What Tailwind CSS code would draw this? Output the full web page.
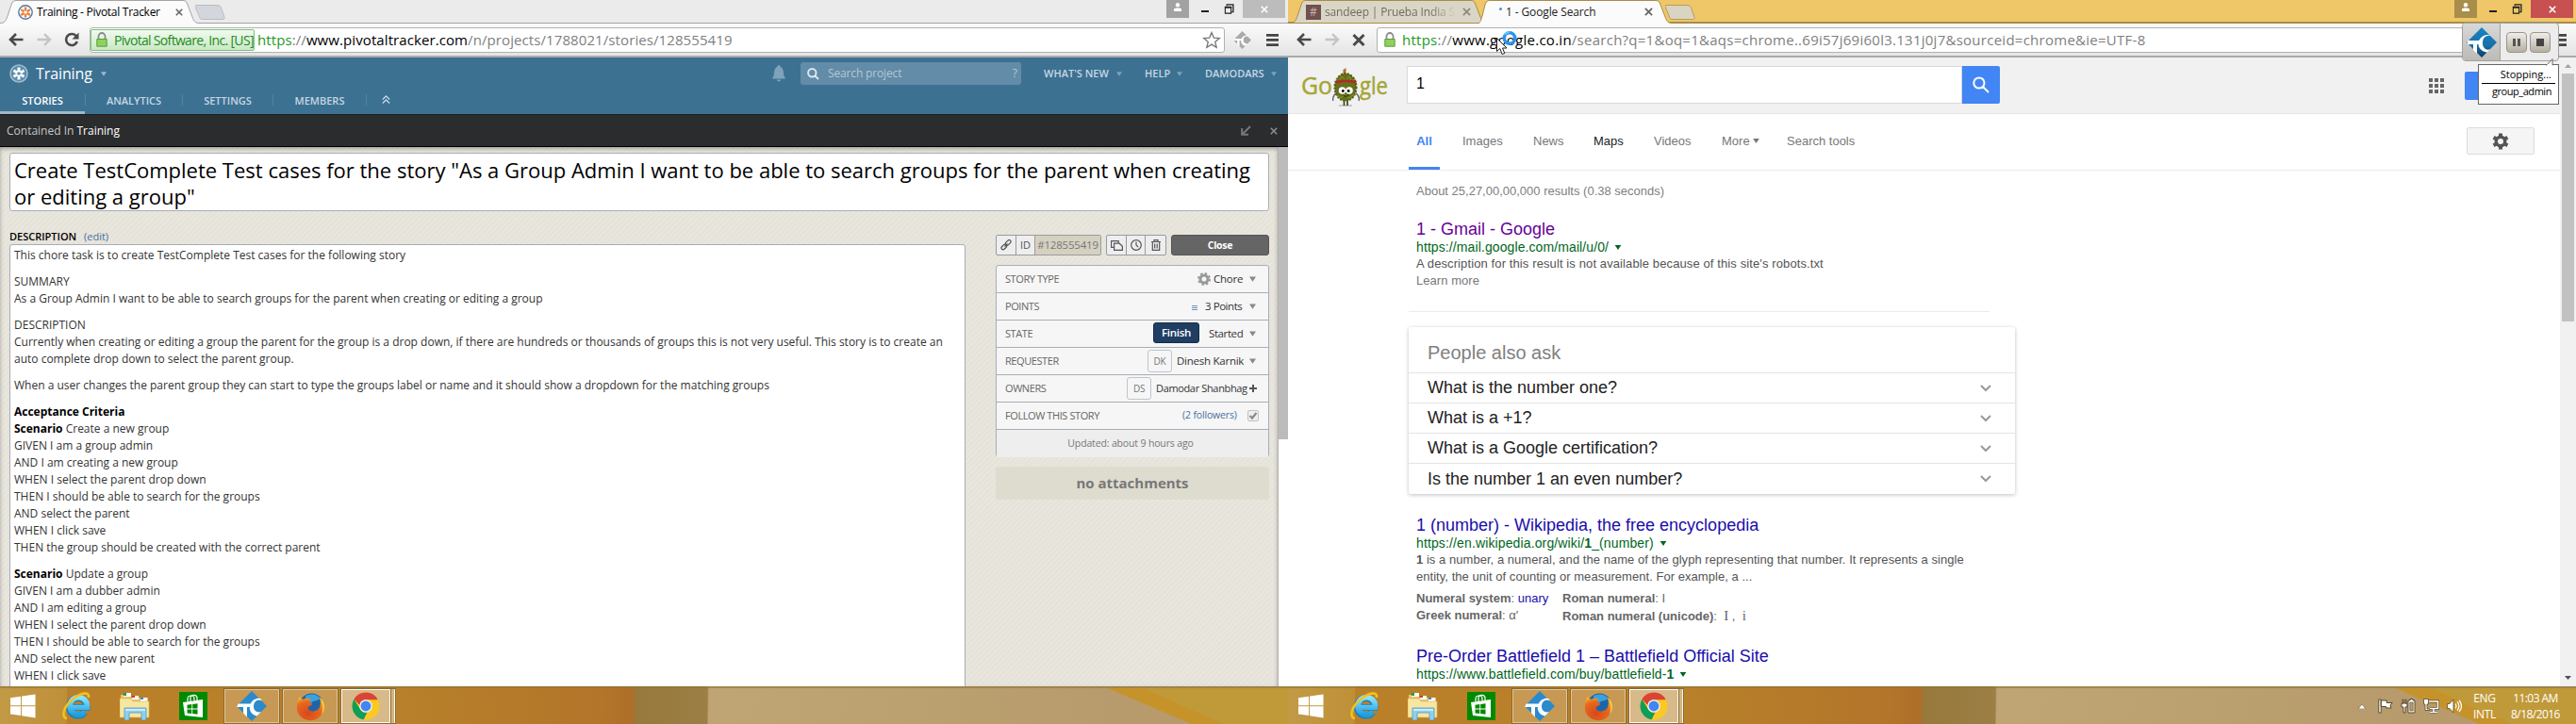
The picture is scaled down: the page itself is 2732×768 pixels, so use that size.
<!DOCTYPE html>
<html lang="en">
<head>
<meta charset="utf-8">
<title>Desktop</title>
<script src="https://cdn.jsdelivr.net/npm/@tailwindcss/browser@4"></script>
</head>
<body class="w-[2732px] h-[768px] overflow-hidden bg-white font-['Open_Sans',sans-serif] text-[12px] whitespace-nowrap">
<svg width="0" height="0" class="absolute">
  <defs>
    <linearGradient id="ieg" x1="0" y1="0" x2="0" y2="1"><stop offset="0" stop-color="#8fe3fb"/><stop offset="1" stop-color="#1f9ddf"/></linearGradient>
    <linearGradient id="tcg" x1="0" y1="0" x2="0" y2="1"><stop offset="0" stop-color="#1b84c4"/><stop offset=".6" stop-color="#1670ab"/><stop offset="1" stop-color="#0a3a60"/></linearGradient>
    <radialGradient id="ffg" cx=".4" cy=".7" r=".7"><stop offset="0" stop-color="#d9481b"/><stop offset=".7" stop-color="#e66a1c"/><stop offset="1" stop-color="#f8b32c"/></radialGradient>
  </defs>
  <symbol id="win" viewBox="0 0 28 26"><path fill="#fff" d="M0 4 11.5 2.3v10H0zM12.5 2.1 27.5 0v12.3h-15zM0 13.3h11.5v10L0 21.7zM12.5 13.3h15V26l-15-2.4z"/></symbol>
  <symbol id="ie" viewBox="0 0 32 32"><path fill="none" stroke="#1681bb" stroke-width="7.2" d="M7.500 17.500H27A9.300 9.300 0 1 0 25 22.500"/><path fill="none" stroke="url(#ieg)" stroke-width="5.6" d="M7.500 17.500H27.500A9.300 9.300 0 1 0 25 22.500"/><path fill="none" stroke="#f4c01e" stroke-width="2.600" d="M6 29C-1 28 3 15 13 8 21 2 30 0 29 7"/></symbol>
  <symbol id="folder" viewBox="0 0 32 30"><path fill="#e7c46c" d="M1 3h9l2 3h18v20H1z"/><path fill="#fff" d="M4 1h8v4H4zM13 4h7v4h-7zM22 6h7v4h-7z"/><path fill="#1aa04b" d="M4 1h3v3H4z"/><path fill="#d33" d="M13 4h3v2h-3z"/><path fill="#2a8fd0" d="M22 6h3v2h-3z"/><path fill="#f7e6a0" stroke="#d9b75f" stroke-width=".6" d="M0 7h12l2 3h17v17H0z"/><path fill="#8fd0ee" stroke="#4b9dc9" stroke-width=".8" d="M5 17h23v13h-5v-8H10v8H5z"/><path fill="#c9ecfa" d="M6 18h21v2H6z"/></symbol>
  <symbol id="store" viewBox="0 0 30 30"><path fill="#008a00" d="M0 0h30v30H0z"/><path fill="none" stroke="#fff" stroke-width="1.2" d="M9 10V7c0-4 7-4 7 0v2M12 10V6c0-4 7-3 7 0v3"/><path fill="#fff" d="M4 11l21-3v19L6 25z"/><path fill="#008a00" d="M8.500 13.700l4.800-.600v4.500H8.500zM14.200 13l5.300-.8v5.400h-5.300zM8.500 18.500h4.800V23l-4.800-.6zM14.200 18.500h5.300v5.300l-5.300-.7z"/></symbol>
  <symbol id="tc" viewBox="0 0 32 32"><path d="M16 0 32 16 16 32 0 16z"/><path fill="#fff" d="M1.500 13.500h13v3.500H11v10.500l-4-4V17H0zM27 10c-6-2-9 2-9 6.500s4 7 8 5.500l-4.500 4.500c-7-1-9-8-7-12.500 2-5 7-7 10.500-6z"/></symbol>
  <symbol id="tcw" viewBox="0 0 32 32"><path fill="url(#tcg)" d="M16 0 32 16 16 32 0 16z"/><path fill="#fff" d="M1 14h13v4h-3v10l-4-4v-6H1zM26 9c-7-1-9 3-9 8s4 8 8 6l-3 3.500c-8-1-11-7-9-12 2-5 8-8 13-5.500z"/></symbol>
  <symbol id="ff" viewBox="0 0 32 32"><circle cx="17" cy="15" r="13.500" fill="#1f64a8"/><path fill="#3ba3dc" d="M10 5c5-4 13-3 16 2-3 4-8 2-9 5-3 0-6-2-7-7z"/><path fill="url(#ffg)" d="M4 5c1 2 2 3 4 3 4-2 6-1 8 0-2 2-1 4 2 5-1 3-5 2-5 5 1 4 7 4 11 1 4-4 3-10 1-14 6 5 7 12 4 18-3 6-9 9-15 8C5 30 0 23 1 15c0-3 1-7 3-10z"/><path fill="#fbd64a" d="M27 6c5 6 5 13 1 19 2-7 2-12-1-19z"/></symbol>
  <symbol id="chrome" viewBox="0 0 32 32"><circle cx="16" cy="16" r="15.500" fill="#fbc923"/><path fill="#da4437" d="M2.600 8.200A15.500 15.500 0 0 1 29.700 8.800H16a7.200 7.200 0 0 0-7 6z"/><path fill="#0f9d58" d="M2.600 8.200 9.800 19.600a7.200 7.200 0 0 0 7.700 3.400L13.600 31.300A15.500 15.500 0 0 1 2.600 8.200z"/><circle cx="16" cy="16" r="7.200" fill="#f3f3f3"/><circle cx="16" cy="16" r="5.800" fill="#4285f4"/></symbol>
  <symbol id="back" viewBox="0 0 16 14"><path fill="none" stroke="currentColor" stroke-width="2.600" d="M15.500 7H2.500M8 1 2 7l6 6"/></symbol>
  <symbol id="fwd" viewBox="0 0 16 14"><path fill="none" stroke="currentColor" stroke-width="2.400" d="M.5 7h13M8 1l6 6-6 6"/></symbol>
  <symbol id="lock" viewBox="0 0 12 16"><path fill="none" stroke="#8b8b8b" stroke-width="1.800" d="M2.500 8V4.500a3.500 3.500 0 0 1 7 0V8"/><path fill="#8fd15c" stroke="#5c9e3c" stroke-width="1" d="M.8 7.500h10.400v7.700H.8z"/></symbol>
  <symbol id="person" viewBox="0 0 10 10"><circle cx="5" cy="2.300" r="2.200" fill="#fff"/><path fill="#fff" d="M1 9V6.500C1 5 9 5 9 6.500V9z"/></symbol>
  <symbol id="restore" viewBox="0 0 11 12"><path fill="none" stroke="#222" stroke-width="1.400" d="M3 2.500V1h7.300v8.500H8.500"/><path fill="none" stroke="#222" stroke-width="1.200" d="M1 4h6.800v7H1z"/><path fill="#222" d="M.5 3h8v2h-8z"/></symbol>
  <symbol id="x" viewBox="0 0 10 10"><path fill="none" stroke="currentColor" stroke-width="2" d="M1 1l8 8M9 1l-8 8"/></symbol>
  <symbol id="tri" viewBox="0 0 8 6"><path fill="currentColor" d="M0 0h8L4 6z"/></symbol>
  <symbol id="menu" viewBox="0 0 13 13"><path fill="#444" d="M0 0h13v2.700H0zM0 5.100h13v2.700H0zM0 10.200h13v2.700H0z"/></symbol>
  <symbol id="chev" viewBox="0 0 12 8"><path fill="none" stroke="#999" stroke-width="2" d="M1 1l5 5 5-5"/></symbol>
</svg>

<main class="flex h-[728px]">
<!-- Left monitor: Pivotal Tracker -->
<section class="w-[1366px] h-[728px] flex flex-col shrink-0 overflow-hidden">
  <div class="relative h-[25px] bg-[#ebebeb] border-b border-[#a3a3a3] flex shrink-0">
    <div class="relative w-[207px] h-[25px] flex items-center pl-[19px]">
      <svg class="absolute left-0 top-0" width="212" height="25"><path d="M-1 24.500C6 24.500 6 22 8 17L12 5c1-3 2-4.500 5-4.500h177c3 0 4 1.500 5 4.500l5 13c2 5 3 6.500 8 6.500v1H0z" fill="#fbfbfb" stroke="#a3a3a3"/></svg>
      <svg class="relative" width="16" height="16" viewBox="0 0 16 16"><circle cx="8" cy="8" r="7.200" fill="#fff" stroke="#4c7ba8" stroke-width="1.400"/><g stroke="#ee7f3c" stroke-width="2.400"><path d="M8 2.500v4M8 9.500v4M3.200 5.200l3.400 2M9.500 8.900l3.400 2M3.200 10.900l3.400-2M9.500 7.200l3.400-2"/></g></svg>
      <span class="relative ml-[4px] w-[132px] tracking-[-0.28px]">Training - Pivotal Tracker</span>
      <svg class="relative ml-[15px] text-[#666]" width="8" height="8"><use href="#x"/></svg>
    </div>
    <svg width="32" height="25"><path d="M1 5.500h22c3 0 4 1 5 4l3 9c.5 2-1 2-2 2H8c-3 0-3-1-4-4L0 7c0-1 0-1.500 1-1.500z" fill="#d3d7dd" stroke="#b8bcc2"/></svg>
    <div class="flex-1"></div>
    <div class="w-[24px] h-[19px] bg-[#a2a2a2] flex justify-center pt-[3px]"><svg width="10" height="10"><use href="#person"/></svg></div>
    <div class="w-[57px] h-[19px] flex pl-[13px] pt-[4px]"><i class="block w-[8px] h-[2px] bg-[#222] mt-[7px]"></i><svg class="ml-[16px]" width="11" height="11"><use href="#restore"/></svg></div>
    <div class="w-[45px] h-[19px] bg-[#bcbcbc] text-white flex justify-center items-center mr-[3px]"><svg width="8" height="8"><use href="#x"/></svg></div>
  </div>
  <div class="h-[36px] shrink-0 flex items-center bg-gradient-to-b from-[#fbfbfb] to-[#e4e4e4] border-b-2 border-[#aaa] pl-[9px] text-[#4a4a4a]">
    <svg width="16" height="14"><use href="#back"/></svg>
    <svg class="ml-[14px] text-[#c4c4c4]" width="16" height="14"><use href="#fwd"/></svg>
    <svg class="ml-[13px]" width="16" height="16" viewBox="0 0 16 16"><path fill="none" stroke="currentColor" stroke-width="2.600" d="M13 4.500A6 6 0 1 0 13.800 10"/><path fill="currentColor" d="M15.500.5v7h-7z"/></svg>
    <div class="ml-[11px] w-[1204px] h-[27px] bg-white border border-[#b1b1b1] rounded-[3px] flex items-center">
      <div class="w-[174px] h-[23px] bg-gradient-to-b from-[#f1faf0] to-[#c9e8c5] border border-[#7fc07f] rounded-[2px] flex items-center pl-[5px] text-[#238b1b] text-[14px]">
        <svg width="12" height="16"><use href="#lock"/></svg><span class="ml-[7px] tracking-[-0.68px]">Pivotal Software, Inc. [US]</span></div>
      <span class="ml-[3px] text-[15px] text-[#808080] tracking-[0.09px] w-[600px]"><span class="text-[#1d9a1d]">https</span>://<span class="text-black">www.pivotaltracker.com</span>/n/projects/1788021/stories/128555419</span>
      <div class="flex-1"></div>
      <svg class="mr-[3px]" width="20" height="19" viewBox="0 0 20 19"><path fill="#fff" stroke="#777" stroke-width="1.300" d="M10 1.500l2.300 5.600 6 .4-4.600 3.900 1.500 5.900L10 14.100l-5.200 3.200 1.500-5.900L1.700 7.500l6-.4z"/></svg>
    </div>
    <svg class="ml-[9px] fill-[#aaa]" width="19" height="19"><use href="#tc"/></svg>
    <svg class="ml-[16px]" width="13" height="13"><use href="#menu"/></svg>
  </div>
  <div class="h-[60px] shrink-0 bg-[#3d7192] flex flex-col text-[#c5d7e2]">
    <div class="h-[34px] flex items-center pl-[10px]">
      <svg width="20" height="20" viewBox="0 0 20 20"><circle cx="10" cy="10" r="9" fill="#5b8dac" stroke="#9dbccd" stroke-width="1.600"/><g stroke="#fff" stroke-width="3"><path d="M10 3.500v5M10 11.500v5M4.500 6.800l4 2.400M11.500 10.800l4 2.400M4.500 13.200l4-2.400M11.500 9.200l4-2.400"/></g></svg>
      <span class="ml-[8px] w-[61px] text-[16px] text-white tracking-[-0.1px]">Training</span>
      <svg class="ml-[8px] text-[#9bbace]" width="6" height="5"><use href="#tri"/></svg>
      <svg class="ml-[706px]" width="14" height="18" viewBox="0 0 14 18"><path fill="#7fa3bb" d="M7 0c1 0 1.500 1 1.500 1.800C12 3 12 8 12.300 11l1.700 3.500H0L1.700 11C2 8 2 3 5.500 1.800 5.500 1 6 0 7 0zM5 15.500h4c0 2.500-4 2.500-4 0z"/></svg>
      <div class="ml-[16px] w-[234px] h-[24px] rounded-[3px] bg-[#628ca8] flex items-center pl-[7px] pr-[4px] text-[#b3c9d7]">
        <svg width="13" height="13" viewBox="0 0 13 13"><path fill="none" stroke="#dce7ee" stroke-width="2" d="M8.400 8.400 12 12M9.500 5.200a4.200 4.200 0 1 1-8.400 0 4.200 4.200 0 0 1 8.400 0z"/></svg>
        <span class="ml-[9px] flex-1 tracking-[-0.15px]">Search project</span><span>?</span>
      </div>
      <span class="ml-[24px] w-[70px] font-semibold text-[11px]">WHAT'S NEW</span><svg class="ml-[7px] text-[#7da2b9]" width="6" height="5"><use href="#tri"/></svg>
      <span class="ml-[24px] w-[27px] font-semibold text-[11px]">HELP</span><svg class="ml-[7px] text-[#7da2b9]" width="6" height="5"><use href="#tri"/></svg>
      <span class="ml-[24px] w-[63px] font-semibold text-[11px]">DAMODARS</span><svg class="ml-[7px] text-[#7da2b9]" width="6" height="5"><use href="#tri"/></svg>
    </div>
    <div class="h-[26px] flex font-semibold text-[11px] leading-[23px] bg-no-repeat">
      <span class="w-[90px] text-center text-white border-b-3 border-[#a0b8c9] relative">STORIES</span>
      <i class="w-px h-[12px] mt-[5px] bg-[#5583a1]"></i>
      <span class="w-[102px] text-center">ANALYTICS</span>
      <i class="w-px h-[12px] mt-[5px] bg-[#5583a1]"></i>
      <span class="w-[95px] text-center">SETTINGS</span>
      <i class="w-px h-[12px] mt-[5px] bg-[#5583a1]"></i>
      <span class="w-[98px] text-center">MEMBERS</span>
      <i class="w-px h-[12px] mt-[5px] bg-[#5583a1]"></i>
      <svg class="ml-[16px] mt-[6px]" width="9" height="9" viewBox="0 0 9 9"><path fill="none" stroke="#c5d7e2" stroke-width="1.300" d="M.8 4.500l3.700-3.500 3.700 3.500M.8 8.500l3.700-3.500 3.700 3.500"/></svg>
    </div>
  </div>
  <div class="h-[35px] shrink-0 bg-[#2b2c2e] border-t border-t-[#1c1c1d] border-b border-b-black flex items-center pl-[7px] text-[#c8c8c8]">
    <span class="flex-1">Contained In <span class="text-white">Training</span></span>
    <svg class="mr-[20px]" width="11" height="11" viewBox="0 0 11 11"><path fill="none" stroke="#777" stroke-width="2" d="M10 1 2 9M1.200 3v6.800H8"/></svg>
    <svg class="mr-[11px] text-[#8c8c8c]" width="8" height="8"><use href="#x"/></svg>
  </div>
  <div class="flex-1 flex min-h-0">
    <div class="w-[1356px] pl-[10px] pt-[6px] bg-[repeating-linear-gradient(135deg,#e9e6de_0px,#e9e6de_2px,#e5e2d9_2px,#e5e2d9_4px)] shadow-[inset_0_2px_4px_rgba(0,0,0,0.3)] border-r border-[#b5b3ad] overflow-hidden">
      <div class="w-[1336px] h-[62px] bg-white border border-[#a9adb5] rounded-[3px] pl-[4px] pt-[3px] text-[22px] leading-[28px] text-black"><div>Create TestComplete Test cases for the story "As a Group Admin I want to be able to search groups for the parent when creating</div><div>or editing a group"</div></div>
      <div class="flex">
        <div class="w-[1014px] pt-[18px]">
          <div class="h-[17px] leading-[17px] text-[11px] flex"><b class="font-semibold text-black w-[79px]">DESCRIPTION</b><span class="text-[#4271a0]">(edit)</span></div>
          <div class="h-[480px] bg-white border border-[#a9adb5] rounded-[3px] pl-[4px] pt-[2px] leading-[18px] text-[#333] flex flex-col gap-[10px]">
            <div>This chore task is to create TestComplete Test cases for the following story</div>
            <div>SUMMARY<br>As a Group Admin I want to be able to search groups for the parent when creating or editing a group</div>
            <div>DESCRIPTION<br>Currently when creating or editing a group the parent for the group is a drop down, if there are hundreds or thousands of groups this is not very useful. This story is to create an<br>auto complete drop down to select the parent group.</div>
            <div>When a user changes the parent group they can start to type the groups label or name and it should show a dropdown for the matching groups</div>
            <div><b class="text-black">Acceptance Criteria</b><br><b class="text-black">Scenario</b> Create a new group<br>GIVEN I am a group admin<br>AND I am creating a new group<br>WHEN I select the parent drop down<br>THEN I should be able to search for the groups<br>AND select the parent<br>WHEN I click save<br>THEN the group should be created with the correct parent</div>
            <div><b class="text-black">Scenario</b> Update a group<br>GIVEN I am a dubber admin<br>AND I am editing a group<br>WHEN I select the parent drop down<br>THEN I should be able to search for the groups<br>AND select the new parent<br>WHEN I click save</div>
          </div>
        </div>
        <div class="ml-[32px] mt-[25px] w-[290px]">
          <div class="flex h-[22px] text-[#555]">
            <div class="flex w-[112px] border border-[#999ba0] rounded-[2px] bg-[#eee]">
              <div class="w-[20px] flex items-center justify-center"><svg width="12" height="12" viewBox="0 0 12 12"><g fill="none" stroke="#555" stroke-width="1.200"><rect x="5" y="1.600" width="6.500" height="3.600" rx="1.800" transform="rotate(-45 8.200 3.400)"/><rect x=".6" y="6.200" width="6.500" height="3.600" rx="1.800" transform="rotate(-45 3.800 8)"/><path d="M4.500 7.500l3-3"/></g></svg></div>
              <div class="w-[21px] border-x border-[#999ba0] text-[11px] leading-[20px] text-center">ID</div>
              <div class="flex-1 bg-[#d5d0c0] text-[11.500px] leading-[20px] text-center text-[#777] tracking-[-0.2px]">#128555419</div>
            </div>
            <div class="ml-[5px] flex w-[64px] border border-[#999ba0] rounded-[2px] bg-[#eee]">
              <div class="w-[20px] flex items-center justify-center"><svg width="13" height="11" viewBox="0 0 13 11"><path fill="#eee" stroke="#555" stroke-width="1.200" d="M3 7.400H.6V.6h7.600V3M3.600 3.200h5.600l3.200 3v4.200H3.600z"/></svg></div>
              <div class="w-[21px] border-x border-[#999ba0] flex items-center justify-center"><svg width="12" height="12" viewBox="0 0 12 12"><path fill="none" stroke="#555" stroke-width="1.200" d="M11.300 6A5.300 5.300 0 1 1 .7 6a5.300 5.300 0 0 1 10.600 0zM6 2.500V6l2.200 2.200"/></svg></div>
              <div class="flex-1 flex items-center justify-center"><svg width="10" height="12" viewBox="0 0 10 12"><path fill="none" stroke="#555" stroke-width="1.200" d="M0 2.500h10M3 2.500V.7h4v1.800M1.300 2.500v8.800h7.400V2.500M3.700 4.500V9.500M6.200 4.500V9.500"/></svg></div>
            </div>
            <div class="ml-[5px] flex-1 bg-[#656565] border border-[#555] rounded-[3px] text-white font-bold text-[10.500px] tracking-[-0.3px] leading-[21px] text-center">Close</div>
          </div>
          <div class="mt-[10px] h-[204px] border border-[#a9adb8] rounded-[3px] bg-[#f6f6f6] text-[11.500px] tracking-[-0.25px] text-[#333] divide-y divide-[#a9adb8] *:flex *:items-center *:h-[29px] *:pl-[9px] *:pr-[13px]">
            <div><span class="flex-1 text-[11px] text-[#666] tracking-[-0.42px]">STORY TYPE</span><svg width="14" height="14" viewBox="0 0 14 14"><circle cx="7" cy="7" r="4" fill="none" stroke="#999" stroke-width="3"/><circle cx="7" cy="7" r="6.100" fill="none" stroke="#999" stroke-width="1.800" stroke-dasharray="2.400 2.390"/></svg><span class="ml-[3px] w-[32px]">Chore</span><svg class="ml-[6px] text-[#888]" width="7" height="6"><use href="#tri"/></svg></div>
            <div><span class="flex-1 text-[11px] text-[#666] tracking-[-0.42px]">POINTS</span><svg class="mt-[3px]" width="6" height="6"><path fill="#6f96b8" d="M0 0h6v1H0zM0 2h6v1H0zM0 4h6v1H0z"/></svg><span class="ml-[8px] w-[41px] tracking-[-0.45px]">3 Points</span><svg class="ml-[6px] text-[#888]" width="7" height="6"><use href="#tri"/></svg></div>
            <div><span class="flex-1 text-[11px] text-[#666] tracking-[-0.42px]">STATE</span><span class="w-[49px] h-[22px] -mt-[2px] rounded-[3px] bg-[#203e64] border border-[#162c4a] text-white font-semibold leading-[20px] text-center text-[11.500px] tracking-[-0.3px]">Finish</span><span class="ml-[10px] w-[37px] tracking-[-0.4px]">Started</span><svg class="ml-[6px] text-[#888]" width="7" height="6"><use href="#tri"/></svg></div>
            <div><span class="flex-1 text-[11px] text-[#666] tracking-[-0.42px]">REQUESTER</span><span class="w-[26px] h-[24px] rounded-[3px] border border-[#bcc5cf] text-[#777] leading-[23px] text-center text-[10px]">DK</span><span class="ml-[5px] w-[71px]">Dinesh Karnik</span><svg class="ml-[6px] text-[#888]" width="7" height="6"><use href="#tri"/></svg></div>
            <div><span class="flex-1 text-[11px] text-[#666] tracking-[-0.42px]">OWNERS</span><span class="w-[26px] h-[24px] rounded-[3px] border border-[#bcc5cf] text-[#777] leading-[23px] text-center text-[10px]">DS</span><span class="ml-[5px] w-[94px] text-[11px] tracking-[-0.35px]">Damodar Shanbhag</span><svg class="ml-[5px] -mr-[1px]" width="8" height="8"><path fill="#555" d="M3 0h2v3h3v2H5v3H3V5H0V3h3z"/></svg></div>
            <div><span class="flex-1 text-[11px] text-[#666] tracking-[-0.42px]">FOLLOW THIS STORY</span><span class="text-[10.500px] text-[#4271a0] w-[58px] tracking-[-0.15px]">(2 followers)</span><svg class="ml-[11px] -mr-[3px]" width="12" height="12" viewBox="0 0 12 12"><rect x=".5" y=".5" width="11" height="11" rx="1.500" fill="#eee" stroke="#c2c2c2"/><path fill="none" stroke="#8a8a8a" stroke-width="2.200" d="M2.500 6l2.500 2.500L9.500 3"/></svg></div>
            <div class="bg-[#eee] text-[#777] text-[10.500px] justify-center tracking-[-0.15px]">Updated: about 9 hours ago</div>
          </div>
          <div class="mt-[10px] h-[35px] rounded-[3px] bg-[#dedccf] text-[#777] font-bold text-[15px] leading-[35px] text-center">no attachments</div>
        </div>
      </div>
    </div>
    <div class="flex-1 bg-white"><div class="h-[310px] bg-[#bbb]"></div></div>
  </div>
</section>

<!-- Right monitor: Google results -->
<section class="w-[1366px] h-[728px] flex flex-col shrink-0 overflow-hidden relative">
  <div class="relative h-[25px] bg-[#efc768] border-b-2 border-[#a98c4a] flex shrink-0">
    <div class="relative w-[203px] h-[25px] flex items-center pl-[19px]">
      <svg class="absolute left-0 top-0" width="212" height="25"><path d="M1 24.500C8 24.500 8 22 10 17L14 5c1-3 2-4.500 5-4.500h175c3 0 4 1.500 5 4.500l5 13c2 5 3 6.500 4 6.500z" fill="#dad6c6" stroke="#a98c4a"/></svg>
      <span class="relative w-[16px] h-[16px] bg-[#71504d] text-[#c9b3b0] text-[12px] leading-[16px] text-center">#</span>
      <span class="relative ml-[4px] w-[139px] overflow-hidden tracking-[-0.15px] bg-gradient-to-r from-[#6a675d] from-80% to-[#dad6c6] bg-clip-text text-transparent">sandeep | Prueba India Slack</span>
      <svg class="relative ml-[7px] text-[#8d8a7e]" width="9" height="9"><use href="#x"/></svg>
    </div>
    <div class="relative w-[197px] h-[25px] flex items-center pl-[21px]">
      <svg class="absolute left-0 top-0" width="206" height="25"><path d="M-4 25.500C2 24.500 1 22 3 17L6 5c1-3 2-4.500 5-4.500h176c3 0 4 1.500 5 4.500l5 13c2 5 3 6.500 8 6.500v1z" fill="#fbfbfb" stroke="#a98c4a"/></svg>
      <i class="relative w-[3px] h-[3px] rounded-full bg-[#4a86e8] -mt-[6px]"></i>
      <span class="relative ml-[4px] w-[143px] tracking-[-0.12px] text-[#222]">1 - Google Search</span>
      <svg class="relative ml-[4px] text-[#666]" width="9" height="9"><use href="#x"/></svg>
    </div>
    <svg width="32" height="23"><path d="M1 5.500h22c3 0 4 1 5 4l3 9c.5 2-1 2-2 2H8c-3 0-3-1-4-4L0 7c0-1 0-1.500 1-1.500z" fill="#d9d4c4" stroke="#b89a58"/></svg>
    <div class="flex-1"></div>
    <div class="w-[24px] h-[19px] bg-[#a88d4b] flex justify-center pt-[3px]"><svg width="10" height="10"><use href="#person"/></svg></div>
    <div class="w-[57px] h-[19px] flex pl-[13px] pt-[4px]"><i class="block w-[8px] h-[2px] bg-[#222] mt-[7px]"></i><svg class="ml-[16px]" width="11" height="11"><use href="#restore"/></svg></div>
    <div class="w-[45px] h-[19px] bg-[#c75050] text-white flex justify-center items-center mr-[3px]"><svg width="8" height="8"><use href="#x"/></svg></div>
  </div>
  <div class="h-[36px] shrink-0 flex items-center bg-gradient-to-b from-[#fbfbfb] to-[#e4e4e4] border-b-2 border-[#aaa] pl-[9px] text-[#4a4a4a]">
    <svg width="16" height="14"><use href="#back"/></svg>
    <svg class="ml-[14px] text-[#c4c4c4]" width="16" height="14"><use href="#fwd"/></svg>
    <svg class="ml-[13px]" width="14" height="13" viewBox="0 0 14 13"><path fill="none" stroke="currentColor" stroke-width="3" d="M1.500 1l11 11M12.500 1l-11 11"/></svg>
    <div class="ml-[12px] w-[1230px] h-[27px] bg-white border border-[#b1b1b1] rounded-[3px] flex items-center pl-[7px]">
      <svg width="12" height="16"><use href="#lock"/></svg>
      <span class="ml-[7px] text-[15px] text-[#808080] tracking-[0.26px]"><span class="text-[#1d9a1d]">https</span>://<span class="text-black">www.google.co.in</span>/search?q=1&amp;oq=1&amp;aqs=chrome..69i57j69i60l3.131j0j7&amp;sourceid=chrome&amp;ie=UTF-8</span>
    </div>
    <svg class="ml-[19px]" width="13" height="13"><use href="#menu"/></svg>
  </div>
  <div class="flex-1 flex min-h-0 font-['Liberation_Sans',Arial,sans-serif]">
    <div class="w-[1349px] flex flex-col bg-white overflow-hidden">
      <div class="h-[60px] shrink-0 bg-[#f1f1f1] border-b border-[#e5e5e5] flex items-start">
        <div class="ml-[15px] mt-[10px] w-[91px] h-[44px] relative">
          <svg class="overflow-visible" width="91" height="44" viewBox="0 0 91 44"><text x="-1" y="29" font-family="Open Sans" font-size="25" fill="#a5a636" stroke="#a5a636" stroke-width=".5" textLength="33" lengthAdjust="spacingAndGlyphs">Go</text><text x="61" y="29" font-family="Open Sans" font-size="25" fill="#a5a636" stroke="#a5a636" stroke-width=".5" textLength="30" lengthAdjust="spacingAndGlyphs">gle</text>
          <path d="M43.500 3l3-2v8h-3z" fill="#b66d28"/><path d="M39 41h14" stroke="#bbb" stroke-width="1.500"/><path d="M44.500 34v7M48 34v7" stroke="#333e12" stroke-width="1.600"/><ellipse cx="46" cy="21.500" rx="11.500" ry="14.500" fill="#67701a" stroke="#525c12" stroke-width="2" stroke-dasharray="2 1.500"/><path d="M36 12l3 4 3-6 4 5 4-5 3 6 3-4M37 30l4 3 4-4 5 4 5-4" stroke="#8a9530" fill="none"/><path d="M35 15c7-2 15-2 23 0l-1 2.500c-7-2-14-2-21 0z" fill="#b02c28"/><circle cx="42.500" cy="25" r="3.800" fill="#fff"/><circle cx="50" cy="25" r="3.800" fill="#fff"/><circle cx="43.300" cy="25.500" r="1.400"/><circle cx="49.200" cy="25.500" r="1.400"/><path d="M43.500 30c2 1.600 4 1.600 6 0" stroke="#222" fill="none"/><path d="M36 28c-3 2-4 6-3 8M57 28c3 2 4 6 3 8" stroke="#555" stroke-width="1.300" fill="none"/></svg>
        </div>
        <div class="ml-[20px] mt-[9px] w-[589px] h-[40px] bg-white border border-[#d9d9d9] text-[16px] leading-[36px] pl-[9px] text-black">1</div>
        <div class="mt-[9px] w-[40px] h-[40px] bg-[#4285f4] rounded-r-[2px] flex items-center justify-center"><svg width="18" height="18" viewBox="0 0 18 18"><path fill="none" stroke="#fff" stroke-width="2" d="M11 11l6 6M12.500 7A5.600 5.600 0 1 1 1.300 7a5.600 5.600 0 0 1 11.200 0z"/></svg></div>
        <svg class="ml-[455px] mt-[22px]" width="16" height="16"><path fill="#666" d="M0 0h4v4H0zM6 0h4v4H6zM12 0h4v4h-4zM0 6h4v4H0zM6 6h4v4H6zM12 6h4v4h-4zM0 12h4v4H0zM6 12h4v4H6zM12 12h4v4h-4z"/></svg>
        <div class="ml-[22px] mt-[15px] w-[70px] h-[30px] rounded-[2px] bg-[#4285f4] shrink-0"></div>
      </div>
      <div class="h-[60px] shrink-0 border-b border-[#ebebeb] flex text-[13px] leading-[57px] text-[#777] pl-[128px]">
        <span class="w-[33px] text-center font-bold text-[#4285f4] border-b-3 border-[#4285f4]">All</span>
        <span class="ml-[24px] w-[75px]">Images</span><span class="w-[64px]">News</span><span class="w-[64px] text-[#222]">Maps</span><span class="w-[72px]">Videos</span><span class="w-[33px]">More</span><svg class="mt-[26px] w-[36px]" width="7" height="5"><use href="#tri" width="7" height="5"/></svg><span>Search tools</span>
        <div class="ml-auto mr-[27px] mt-[14px] w-[72px] h-[29px] border border-[#dcdcdc] rounded-[2px] bg-[#f5f5f5] flex items-center justify-center"><svg width="18" height="18" viewBox="0 0 18 18"><circle cx="9" cy="9" r="4.700" fill="none" stroke="#555" stroke-width="3.400"/><path stroke="#555" stroke-width="4" d="M9 .5v3M9 14.500v3M1.600 4.800l2.600 1.500M13.800 11.800l2.600 1.400M1.600 13.200l2.600-1.400M13.800 6.200l2.600-1.400"/></svg></div>
      </div>
      <div class="pl-[136px] text-[13px] text-[#545454] leading-[18px]">
        <div class="mt-[13px] text-[#808080]">About 25,27,00,00,000 results (0.38 seconds)</div>
        <div class="mt-[21px] h-[20px] text-[18px] leading-[20px] text-[#609]">1 - Gmail - Google</div>
        <div class="flex items-center text-[14px] text-[#006621] tracking-[0.1px]">https://mail.google.com/mail/u/0/<svg class="ml-[6px]" width="8" height="5"><use href="#tri"/></svg></div>
        <div class="tracking-[0.11px]">A description for this result is not available because of this site's robots.txt</div>
        <div class="text-[#777] tracking-[0.05px]">Learn more</div>
      </div>
      <div class="ml-[128px] mt-[23px] w-[616px] h-px bg-[#ebebeb] shrink-0"></div>
      <div class="ml-[128px] mt-[16px] w-[643px] h-[177px] shrink-0 rounded-[2px] shadow-[0_1px_4px_rgba(0,0,0,0.25)] text-[18px] text-[#222] divide-y divide-[#e4e4e4] *:pl-[20px] *:pr-[25px]">
        <div class="h-[49px] leading-[54px] text-[20px] text-[#808080]">People also ask</div>
        <div class="flex items-center h-[32px]"><span class="flex-1">What is the number one?</span><svg width="12" height="8"><use href="#chev"/></svg></div>
        <div class="flex items-center h-[32px]"><span class="flex-1">What is a +1?</span><svg width="12" height="8"><use href="#chev"/></svg></div>
        <div class="flex items-center h-[32px]"><span class="flex-1">What is a Google certification?</span><svg width="12" height="8"><use href="#chev"/></svg></div>
        <div class="flex items-center h-[32px]"><span class="flex-1">Is the number 1 an even number?</span><svg width="12" height="8"><use href="#chev"/></svg></div>
      </div>
      <div class="pl-[136px] mt-[23px] text-[13px] text-[#545454] leading-[18px]">
        <div class="h-[20px] text-[18px] leading-[20px] text-[#1a0dab]">1 (number) - Wikipedia, the free encyclopedia</div>
        <div class="flex items-center text-[14px] text-[#006621] whitespace-pre tracking-[0.13px]">https://en.wikipedia.org/wiki/<b>1</b>_(number)<svg class="ml-[6px]" width="8" height="5"><use href="#tri"/></svg></div>
        <div class="tracking-[0.04px]"><b>1</b> is a number, a numeral, and the name of the glyph representing that number. It represents a single</div>
        <div class="tracking-[0.04px]">entity, the unit of counting or measurement. For example, a ...</div>
        <div class="flex mt-[5px] text-[#666]"><div class="w-[155px]"><b>Numeral system</b>: <span class="text-[#1a0dab]">unary</span><br><b>Greek numeral</b>: α'</div><div><b>Roman numeral</b>: I<br><b>Roman numeral (unicode)</b>: &nbsp;<span class="font-['Liberation_Serif'] text-[15px]">I</span> , &nbsp;<span class="font-['Liberation_Serif'] text-[15px]">i</span></div></div>
        <div class="mt-[23px] h-[20px] text-[18px] leading-[20px] text-[#1a0dab]">Pre-Order Battlefield 1 – Battlefield Official Site</div>
        <div class="flex items-center text-[14px] text-[#006621] tracking-[0.11px]">https://www.battlefield.com/buy/battlefield-<b>1</b><svg class="ml-[6px]" width="8" height="5"><use href="#tri"/></svg></div>
        <div>Battlefield™ 1 Early Enlister Deluxe Edition ... . Be the first on the frontlines as you the Early Enlister</div>
      </div>
    </div>
    <div class="w-[17px] bg-[#f1f1f1] flex flex-col items-center">
      <svg class="mt-[7px] rotate-180 text-[#a3a3a3]" width="7" height="4" viewBox="0 0 7 4"><path fill="currentColor" d="M0 0h7L3.500 4z"/></svg>
      <div class="mt-[6px] w-[13px] h-[263px] bg-[#c1c1c1]"></div>
      <svg class="mt-auto mb-[7px] text-[#505050]" width="7" height="4" viewBox="0 0 7 4"><path fill="currentColor" d="M0 0h7L3.500 4z"/></svg>
    </div>
  </div>
  <!-- Mouse pointer with busy ring -->
  <svg class="absolute left-[220px] top-[31px]" width="26" height="30" viewBox="0 0 26 30"><circle cx="15" cy="9.500" r="5.700" fill="none" stroke="#2b93ee" stroke-width="3.600"/><path fill="none" stroke="#69c4fb" stroke-width="2" d="M10 6a6.500 6.500 0 0 1 5-3"/><path fill="#fff" stroke="#222" d="M1.500 9.500v14l3.300-3 2.300 6 2.700-1-2.300-5.500h4.500z"/></svg>
  <!-- Recorder toolbar floating on the desktop -->
  <div class="absolute left-[1245px] top-[24px] w-[103px] h-[41px] rounded-[4px] border border-[#a5a099] bg-[#ececec] flex items-center overflow-hidden">
    <div class="w-[40px] h-full bg-gradient-to-b from-[#d8d8d8] to-[#bdbab6] border-r border-[#a5a099] flex items-center justify-center"><svg width="32" height="32"><use href="#tcw"/></svg></div>
    <div class="ml-[6px] w-[22px] h-[22px] rounded-[4px] border border-[#9b958a] bg-gradient-to-b from-[#efedea] to-[#b7b0a0] flex gap-[2px] items-center justify-center"><i class="w-[3px] h-[8px] bg-[#555]"></i><i class="w-[3px] h-[8px] bg-[#555]"></i></div>
    <div class="ml-[3px] w-[22px] h-[22px] rounded-[4px] border border-[#9b958a] bg-gradient-to-b from-[#efedea] to-[#b7b0a0] flex items-center justify-center"><i class="w-[8px] h-[8px] bg-[#444]"></i></div>
  </div>
  <div class="absolute left-[1262px] top-[68px] w-[86px] h-[43px] bg-white border border-[#666] px-[3px] text-[11px] text-black font-['Open_Sans'] text-right">
    <div class="h-[20px] leading-[20px] pr-[4px] border-b border-black">Stopping...</div>
    <div class="leading-[15px] pr-[4px] tracking-[-0.45px]">group_admin</div>
    <svg class="absolute right-0 -top-[8px]" width="14" height="9"><path fill="#fff" stroke="#666" d="M1.500 8.500l6.500-7v7"/><path fill="#fff" d="M2.200 7.500h5.300V9H2z"/></svg>
  </div>
</section>
</main>

<!-- Taskbars -->
<footer class="flex h-[40px]">
  <div class="relative w-[1366px] h-[40px] border-t-2 border-[#8f7338]/60 flex items-center bg-[linear-gradient(91deg,#c29a45_0,#bf9038_70px,#ba8029_72px,#b8802a_430px,#b3752a_640px,#ad6f29_672px,#97793c_674px,#9c7f45_750px,#bfa574_752px,#b79b6c_1180px,#b79b6c_1366px)]">
    <svg class="ml-[11px] z-10" width="27" height="26"><use href="#win"/></svg>
    <svg class="ml-[27px] z-10" width="32" height="32"><use href="#ie"/></svg>
    <svg class="ml-[30px] z-10" width="32" height="30"><use href="#folder"/></svg>
    <svg class="ml-[31px] z-10" width="30" height="30"><use href="#store"/></svg>
    <div class="ml-[17px] w-[60px] h-[38px] z-10 bg-white/20 border border-[#8a6a33] shadow-[inset_0_0_0_1px_rgba(255,240,210,0.5)] flex items-center justify-center"><svg class="fill-[#2a8acb]" width="32" height="32"><use href="#tc"/></svg></div>
    <div class="ml-[2px] w-[60px] h-[38px] z-10 bg-white/20 border border-[#8a6a33] shadow-[inset_0_0_0_1px_rgba(255,240,210,0.5)] flex items-center justify-center"><svg width="31" height="31"><use href="#ff"/></svg></div>
    <div class="ml-[2px] w-[54px] h-[38px] z-10 bg-white/45 border border-[#8a6a33] shadow-[inset_0_0_0_1px_rgba(255,255,245,0.95)] flex items-center justify-center"><svg width="30" height="30"><use href="#chrome"/></svg></div>
    <div class="w-[5px] h-[38px] z-10 bg-white/40 border-y border-r border-[#8a6a33] shadow-[inset_-1px_0_0_0_rgba(255,255,245,0.9)]"></div>
    <svg class="absolute right-0 top-0" width="200" height="38"><path d="M9 0h191v38H98z" fill="#c09a38"/><path d="M9 0h38l84 38H98z" fill="#c6932b"/></svg>
  </div>
  <div class="relative w-[1366px] h-[40px] border-t-2 border-[#8f7338]/60 flex items-center bg-[linear-gradient(91deg,#c29a45_0,#bf9038_70px,#ba8029_72px,#b8802a_430px,#b3752a_640px,#ad6f29_672px,#97793c_674px,#9c7f45_750px,#bfa574_752px,#b79b6c_1180px,#b79b6c_1366px)]">
    <svg class="ml-[11px] z-10" width="27" height="26"><use href="#win"/></svg>
    <svg class="ml-[27px] z-10" width="32" height="32"><use href="#ie"/></svg>
    <svg class="ml-[30px] z-10" width="32" height="30"><use href="#folder"/></svg>
    <svg class="ml-[31px] z-10" width="30" height="30"><use href="#store"/></svg>
    <div class="ml-[17px] w-[60px] h-[38px] z-10 bg-white/20 border border-[#8a6a33] shadow-[inset_0_0_0_1px_rgba(255,240,210,0.5)] flex items-center justify-center"><svg class="fill-[#2a8acb]" width="32" height="32"><use href="#tc"/></svg></div>
    <div class="ml-[2px] w-[60px] h-[38px] z-10 bg-white/20 border border-[#8a6a33] shadow-[inset_0_0_0_1px_rgba(255,240,210,0.5)] flex items-center justify-center"><svg width="31" height="31"><use href="#ff"/></svg></div>
    <div class="ml-[2px] w-[54px] h-[38px] z-10 bg-white/45 border border-[#8a6a33] shadow-[inset_0_0_0_1px_rgba(255,255,245,0.95)] flex items-center justify-center"><svg width="30" height="30"><use href="#chrome"/></svg></div>
    <div class="w-[5px] h-[38px] z-10 bg-white/40 border-y border-r border-[#8a6a33] shadow-[inset_-1px_0_0_0_rgba(255,255,245,0.9)]"></div>
    <svg class="absolute right-0 top-0" width="200" height="38"><path d="M9 0h191v38H98z" fill="#c09a38"/><path d="M9 0h38l84 38H98z" fill="#c6932b"/></svg>
    <div class="ml-auto z-10 flex items-center text-white">
      <svg width="8" height="5"><path fill="#fff" stroke="#6b5a36" stroke-width=".6" d="M0 5l4-5 4 5z"/></svg>
      <svg class="ml-[13px]" width="16" height="16" viewBox="0 0 16 16"><path fill="#fff" stroke="#594a2c" stroke-width="1" d="M.8 1h2.400v14H.8zM3.200 2h6v2.500h6L13 7l1 3H8.500V8.500H3.200z"/></svg>
      <svg class="ml-[8px]" width="16" height="16" viewBox="0 0 16 16"><path fill="#fff" stroke="#594a2c" stroke-width="1" d="M1 5h6v4H5v6H3V9H1zM2 1h1v4H2zM5 1h1v4H5z"/><path fill="#fff" stroke="#594a2c" d="M8 2h2V.5h3V2h2v13H8z"/><path fill="#b79b6c" stroke="#594a2c" stroke-width=".6" d="M9.800 4h3.400v9H9.800z"/></svg>
      <svg class="ml-[8px]" width="17" height="16" viewBox="0 0 17 16"><path fill="none" stroke="#594a2c" stroke-width="3" d="M6 3h9.500v7.500H7M11 10.500V14M7 14.500h8"/><path fill="none" stroke="#fff" stroke-width="1.600" d="M6 3h9.500v7.500H7M11 10.500V14M7 14.500h8"/><path fill="#fff" stroke="#594a2c" stroke-width=".8" d="M.5.500h5V6H4v5h3v1.500H2V6H.5z"/></svg>
      <svg class="ml-[8px]" width="16" height="16" viewBox="0 0 16 16"><path fill="#fff" stroke="#594a2c" stroke-width=".8" d="M.5 5.500h2.500L7 1v14L3 10.500H.5z"/><path fill="none" stroke="#fff" stroke-width="1.200" d="M9 5.500c1.200 1.500 1.200 3.500 0 5M11 3.500c2.500 2.500 2.500 6.500 0 9M13 2c3.300 3.500 3.300 8.500 0 12"/></svg>
      <div class="ml-[11px] w-[26px] leading-[17px] text-center tracking-[-0.3px]">ENG<br>INTL</div>
      <div class="ml-[14px] mr-[16px] w-[54px] leading-[17px] text-center tracking-[-0.55px]">11:03 AM<br>8/18/2016</div>
    </div>
  </div>
</footer>
</body>
</html>
